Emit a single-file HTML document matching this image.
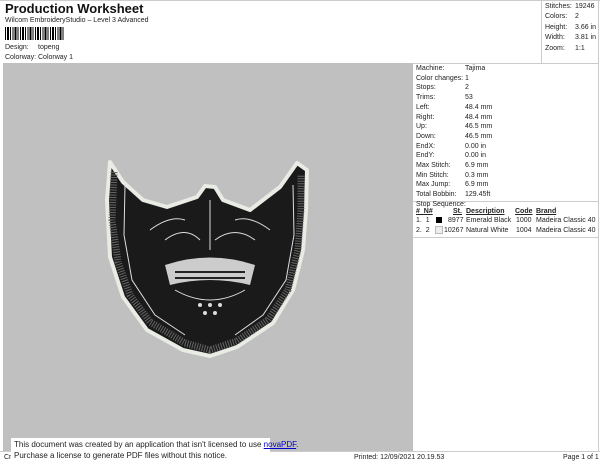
<!DOCTYPE html>
<html><head><style>
body{margin:0;width:600px;height:464px;background:#fff;position:relative;overflow:hidden;font-family:"Liberation Sans",sans-serif;color:#222}
.a{position:absolute;white-space:nowrap}
.s{font-size:7px}
.l{position:absolute;background:#ccc}
</style></head><body>
<div class="a" style="left:5px;top:1px;font-size:13px;font-weight:bold;color:#111">Production Worksheet</div>
<div class="a s" style="left:5px;top:17px">Wilcom EmbroideryStudio – Level 3 Advanced</div>
<div class="a" style="left:5px;top:27px;width:60px;height:13px;background:repeating-linear-gradient(90deg,#000 0 1px,#fff 1px 2px,#000 2px 4px,#fff 4px 5px,#000 5px 6px,#fff 6px 7.5px)"></div>
<div class="a s" style="left:5px;top:44px">Design:</div><div class="a s" style="left:38px;top:44px">topeng</div>
<div class="a s" style="left:5px;top:54px">Colorway:</div><div class="a s" style="left:38px;top:54px">Colorway 1</div>
<div class="l" style="left:0;top:0;width:600px;height:1px"></div>
<div class="l" style="left:598px;top:0;width:1px;height:452px"></div>
<div class="l" style="left:541px;top:0;width:1px;height:63px"></div>
<div class="l" style="left:413px;top:63px;width:186px;height:1px"></div>
<div class="a s" style="left:545px;top:2px;line-height:10.4px">Stitches:<br>Colors:<br>Height:<br>Width:<br>Zoom:</div>
<div class="a s" style="left:575px;top:2px;line-height:10.4px">19246<br>2<br>3.66 in<br>3.81 in<br>1:1</div>
<div class="a" style="left:3px;top:63px;width:410px;height:388px;background:#c0c0c0"></div>
<div class="a s" style="left:416px;top:64px;line-height:9.7px">Machine:<br>Color changes:<br>Stops:<br>Trims:<br>Left:<br>Right:<br>Up:<br>Down:<br>EndX:<br>EndY:<br>Max Stitch:<br>Min Stitch:<br>Max Jump:<br>Total Bobbin:</div>
<div class="a s" style="left:465px;top:64px;line-height:9.7px">Tajima<br>1<br>2<br>53<br>48.4 mm<br>48.4 mm<br>46.5 mm<br>46.5 mm<br>0.00 in<br>0.00 in<br>6.9 mm<br>0.3 mm<br>6.9 mm<br>129.45ft</div>
<div class="l" style="left:413px;top:201px;width:186px;height:1px"></div>
<div class="a s" style="left:416px;top:201px">Stop Sequence:</div>
<div class="a s" style="left:416px;top:208px;font-weight:bold;text-decoration:underline">#&nbsp; N#</div>
<div class="a s" style="left:453px;top:208px;font-weight:bold;text-decoration:underline">St.</div>
<div class="a s" style="left:466px;top:208px;font-weight:bold;text-decoration:underline">Description</div>
<div class="a s" style="left:515px;top:208px;font-weight:bold;text-decoration:underline">Code</div>
<div class="a s" style="left:536px;top:208px;font-weight:bold;text-decoration:underline">Brand</div>
<div class="a s" style="left:416px;top:217px">1.&nbsp; 1</div><div class="a" style="left:436px;top:217px;width:6px;height:6px;background:#000"></div>
<div class="a s" style="left:448px;top:217px">8977</div><div class="a s" style="left:466px;top:217px">Emerald Black</div><div class="a s" style="left:516px;top:217px">1000</div><div class="a s" style="left:536px;top:217px">Madeira Classic 40</div>
<div class="a s" style="left:416px;top:227px">2.&nbsp; 2</div><div class="a" style="left:435px;top:226px;width:6px;height:6px;background:#eee;border:1px solid #bbb"></div>
<div class="a s" style="left:444px;top:227px">10267</div><div class="a s" style="left:466px;top:227px">Natural White</div><div class="a s" style="left:516px;top:227px">1004</div><div class="a s" style="left:536px;top:227px">Madeira Classic 40</div>
<div class="l" style="left:413px;top:237px;width:186px;height:1px"></div>
<svg class="a" style="left:0;top:0" width="600" height="464">
<path d="M110,162 L123,182 143,200 167,207 197,197 205,186 215,187 223,200 250,210 280,187 297,163 307,170 306,210 303,250 293,290 273,323 237,347 210,356 183,350 147,330 123,297 110,257 107,200 Z" fill="#1a1a1a" stroke="#e8ece4" stroke-width="4" stroke-linejoin="round"/>
<path d="M114,172 L112,220 118,262 130,295 150,322 185,343 210,350 237,341 268,320 288,290 298,250 301,210 301,175" fill="none" stroke="#666" stroke-width="7" stroke-dasharray="1 1.5"/>
<g stroke="#ddd" stroke-width="1" fill="none">
<path d="M125,185 L124,235 132,280 155,315 185,335 M293,185 L294,235 286,280 263,315 235,335"/>
<path d="M165,240 Q185,225 200,240 M255,240 Q235,225 215,240 M210,200 L210,250 M175,290 Q210,310 245,290"/>
<path d="M150,230 Q170,215 185,220 M270,230 Q250,215 235,220"/>
</g>
<path d="M165,265 Q210,250 255,265 L250,285 Q210,275 170,285 Z" fill="#ccc"/>
<path d="M175,272 L245,272 M175,278 L245,278" stroke="#222" stroke-width="2"/>
<g fill="#ddd"><circle cx="200" cy="305" r="2"/><circle cx="210" cy="305" r="2"/><circle cx="220" cy="305" r="2"/><circle cx="205" cy="313" r="2"/><circle cx="215" cy="313" r="2"/></g>
</svg>
<div class="l" style="left:0;top:451px;width:600px;height:1px"></div>
<div class="a s" style="left:4px;top:454px">Cr</div>
<div class="a s" style="left:354px;top:454px">Printed: 12/09/2021 20.19.53</div>
<div class="a s" style="left:563px;top:454px">Page 1 of 1</div>
<div class="a" style="left:11px;top:438px;width:259px;height:26px;background:#fff"></div>
<div class="a" style="left:14px;top:439px;font-size:8px;line-height:11px">This document was created by an application that isn't licensed to use <span style="color:#00c;text-decoration:underline">novaPDF</span>.<br>Purchase a license to generate PDF files without this notice.</div>
</body></html>
